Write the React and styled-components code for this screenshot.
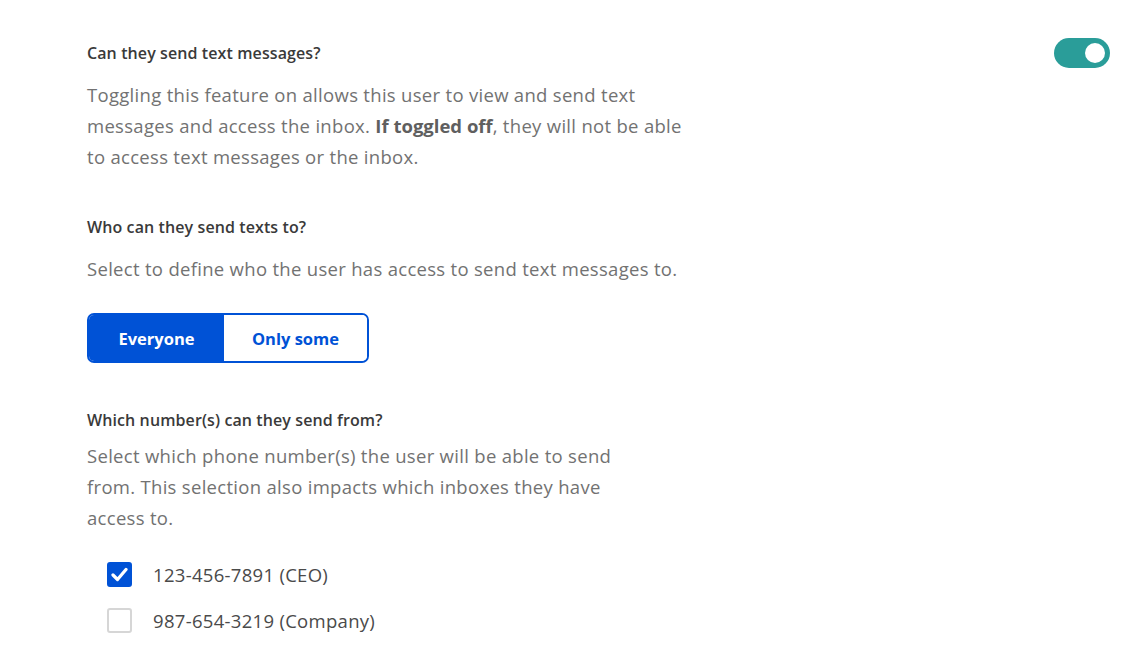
import React, { useState } from "react";
import styled, { createGlobalStyle } from "styled-components";

const Global = createGlobalStyle`
  html, body { margin: 0; padding: 0; background: #ffffff; }
  body { font-family: "Open Sans", Lato, "Liberation Sans", sans-serif; -webkit-font-smoothing: antialiased; }
`;

const Page = styled.div`
  display: flex;
  justify-content: space-between;
  align-items: flex-start;
  padding: 38px 22px 0 87px;
`;

const Content = styled.div`
  display: flex;
  flex-direction: column;
`;

const Section = styled.section`
  display: flex;
  flex-direction: column;
  margin-bottom: ${(p) => p.$mb || 0}px;
`;

const Heading = styled.h3`
  margin: 0 0 ${(p) => p.$gap ?? 11}px 0;
  font-size: 16px;
  line-height: 30px;
  font-weight: 600;
  letter-spacing: 0.1px;
  color: #3a3a3a;
`;

const Body = styled.p`
  margin: 0;
  font-size: 18.5px;
  line-height: 31px;
  letter-spacing: 0.3px;
  color: #727272;
  strong { font-weight: 700; color: #5f5f5f; letter-spacing: 0; }
`;

const Segmented = styled.div`
  display: flex;
  width: fit-content;
  height: 50px;
  box-sizing: border-box;
  margin-top: 29px;
  border: 2px solid #0052d6;
  border-radius: 7px;
  overflow: hidden;
`;

const SegButton = styled.button`
  width: ${(p) => p.$w}px;
  height: 100%;
  border: 0;
  margin: 0;
  padding: 0;
  font-family: inherit;
  font-size: 16.5px;
  font-weight: 700;
  cursor: pointer;
  background: ${(p) => (p.$active ? "#0052d6" : "#ffffff")};
  color: ${(p) => (p.$active ? "#ffffff" : "#0052d6")};
`;

const List = styled.div`
  display: flex;
  flex-direction: column;
  gap: 21px;
  margin-top: 29px;
  padding-left: 20px;
`;

const Row = styled.label`
  display: flex;
  align-items: center;
  height: 25px;
  gap: 21px;
  font-size: 18.5px;
  letter-spacing: 0.3px;
  color: #4a4a4a;
  cursor: pointer;
`;

const Box = styled.span`
  width: 25px;
  height: 25px;
  box-sizing: border-box;
  border-radius: 3px;
  display: flex;
  align-items: center;
  justify-content: center;
  background: ${(p) => (p.$checked ? "#0052d6" : "#ffffff")};
  border: 2px solid ${(p) => (p.$checked ? "#0052d6" : "#d6d6d6")};
`;

const Toggle = styled.button`
  width: 56px;
  height: 30px;
  border-radius: 15px;
  border: 0;
  padding: 0 5px;
  display: flex;
  align-items: center;
  justify-content: ${(p) => (p.$on ? "flex-end" : "flex-start")};
  background: ${(p) => (p.$on ? "#2a9d99" : "#c8c8c8")};
  cursor: pointer;
`;

const Knob = styled.span`
  width: 20px;
  height: 20px;
  border-radius: 50%;
  background: #ffffff;
`;

const Check = () => (
  <svg width="17" height="15" viewBox="0 0 17 15" fill="none">
    <path d="M2 8 L6.5 12.5 L15 2.5" stroke="#fff" strokeWidth="3.2" strokeLinecap="round" strokeLinejoin="round" />
  </svg>
);

export default function App() {
  const [on, setOn] = useState(true);
  const [who, setWho] = useState("everyone");
  const [nums, setNums] = useState({ a: true, b: false });
  return (
    <>
      <Global />
      <Page>
        <Content>
          <Section $mb={40}>
            <Heading>Can they send text messages?</Heading>
            <Body>
              Toggling this feature on allows this user to view and send text
              <br />
              messages and access the inbox. <strong>If toggled off</strong>, they will not be able
              <br />
              to access text messages or the inbox.
            </Body>
          </Section>
          <Section $mb={42}>
            <Heading>Who can they send texts to?</Heading>
            <Body>Select to define who the user has access to send text messages to.</Body>
            <Segmented>
              <SegButton $w={135} $active={who === "everyone"} onClick={() => setWho("everyone")}>
                Everyone
              </SegButton>
              <SegButton $w={143} $active={who === "some"} onClick={() => setWho("some")}>
                Only some
              </SegButton>
            </Segmented>
          </Section>
          <Section>
            <Heading $gap={5}>Which number(s) can they send from?</Heading>
            <Body>
              Select which phone number(s) the user will be able to send
              <br />
              from. This selection also impacts which inboxes they have
              <br />
              access to.
            </Body>
            <List>
              <Row onClick={() => setNums({ ...nums, a: !nums.a })}>
                <Box $checked={nums.a}>{nums.a && <Check />}</Box>
                123-456-7891 (CEO)
              </Row>
              <Row onClick={() => setNums({ ...nums, b: !nums.b })}>
                <Box $checked={nums.b}>{nums.b && <Check />}</Box>
                987-654-3219 (Company)
              </Row>
            </List>
          </Section>
        </Content>
        <Toggle $on={on} onClick={() => setOn(!on)} aria-label="toggle">
          <Knob />
        </Toggle>
      </Page>
    </>
  );
}
